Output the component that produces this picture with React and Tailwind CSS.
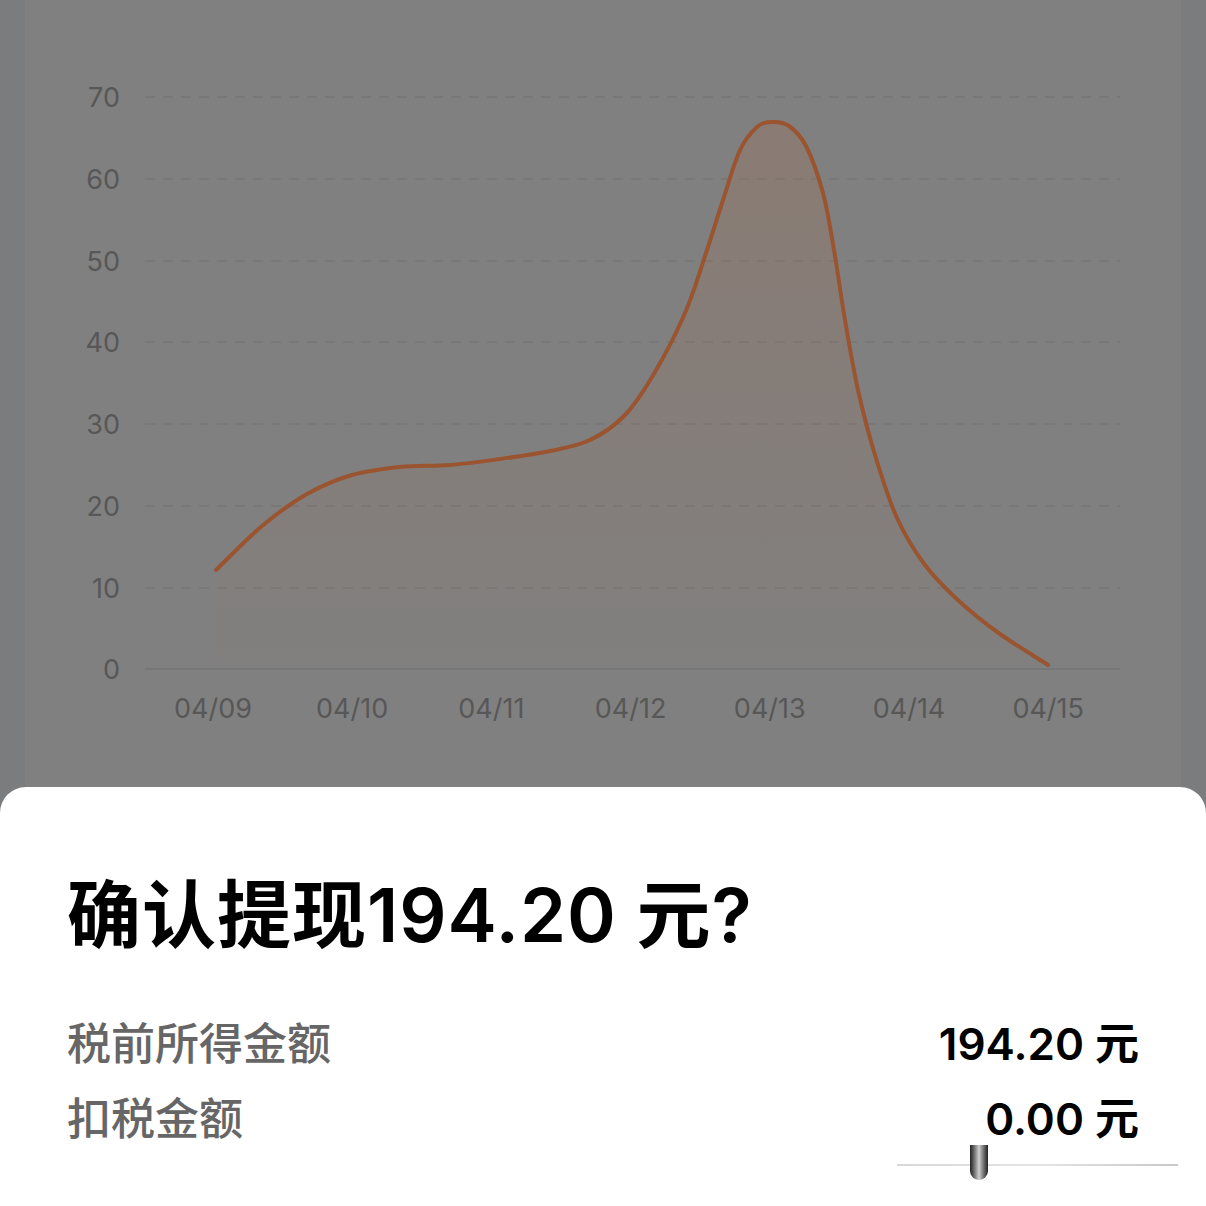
const GRID = [
  { v: 70, y: 97 },
  { v: 60, y: 179 },
  { v: 50, y: 261 },
  { v: 40, y: 342 },
  { v: 30, y: 424 },
  { v: 20, y: 506 },
  { v: 10, y: 588 },
]

const DAYS = ['04/09', '04/10', '04/11', '04/12', '04/13', '04/14', '04/15']

// traced points of the earnings curve, page coordinates
const CURVE = [
  [216, 570], [262, 526], [307, 494], [352, 475], [400, 467], [450, 465],
  [500, 459], [550, 451], [590, 440], [625, 415], [655, 372], [685, 313],
  [706, 253], [723, 200], [740, 150], [757, 127], [772, 122], [789, 126],
  [806, 146], [823, 193], [834, 250], [845, 320], [858, 390], [875, 455],
  [897, 518], [925, 565], [960, 602], [1000, 634], [1048, 665],
]

function smoothPath(pts) {
  let d = `M${pts[0][0]},${pts[0][1]}`
  for (let i = 0; i < pts.length - 1; i++) {
    const p0 = pts[i - 1] || pts[i]
    const p1 = pts[i]
    const p2 = pts[i + 1]
    const p3 = pts[i + 2] || p2
    const c1x = p1[0] + (p2[0] - p0[0]) / 6
    const c1y = p1[1] + (p2[1] - p0[1]) / 6
    const c2x = p2[0] - (p3[0] - p1[0]) / 6
    const c2y = p2[1] - (p3[1] - p1[1]) / 6
    d += ` C${c1x.toFixed(1)},${c1y.toFixed(1)} ${c2x.toFixed(1)},${c2y.toFixed(1)} ${p2[0]},${p2[1]}`
  }
  return d
}

const LABEL_FONT = "Inter, 'Liberation Sans', Arial, sans-serif"

function EarningsChart() {
  const line = smoothPath(CURVE)
  const first = CURVE[0]
  const last = CURVE[CURVE.length - 1]
  const area = `${line} L${last[0]},669 L${first[0]},669 Z`

  return (
    <svg width="1156" height="787" viewBox="25 0 1156 787" className="block">
      <defs>
        <linearGradient id="areaFill" x1="0" y1="97" x2="0" y2="669" gradientUnits="userSpaceOnUse">
          <stop offset="0" stopColor="#c0622e" stopOpacity="0.16" />
          <stop offset="1" stopColor="#c0622e" stopOpacity="0.01" />
        </linearGradient>
      </defs>

      {GRID.map(({ v, y }) => (
        <g key={v}>
          <line x1="145" x2="1120" y1={y} y2={y} stroke="#767676" strokeWidth="1.5" strokeDasharray="10 8" />
          <text x="120" y={y + 10} textAnchor="end" fontSize="27" fill="#575757" fontFamily={LABEL_FONT}>
            {v}
          </text>
        </g>
      ))}
      <line x1="145" x2="1120" y1="669" y2="669" stroke="#757575" strokeWidth="1.5" />
      <text x="120" y="679" textAnchor="end" fontSize="27" fill="#575757" fontFamily={LABEL_FONT}>
        0
      </text>

      {DAYS.map((d, i) => (
        <text
          key={d}
          x={213 + i * 139.2}
          y="718"
          textAnchor="middle"
          fontSize="27"
          fill="#575757"
          fontFamily={LABEL_FONT}
        >
          {d}
        </text>
      ))}

      <path d={area} fill="url(#areaFill)" />
      <path d={line} fill="none" stroke="#9a5430" strokeWidth="4" strokeLinecap="round" strokeLinejoin="round" />
    </svg>
  )
}

export default function App() {
  return (
    <div className="w-full h-[1206px] bg-[#7b7c7e] flex flex-col overflow-hidden font-['Inter','Noto_Sans_CJK_SC',sans-serif]">
      {/* Chart card behind the dim overlay */}
      <div className="mx-[25px] h-[787px] shrink-0 bg-[#808080]">
        <EarningsChart />
      </div>

      {/* Bottom sheet */}
      <div className="relative flex-1 bg-white rounded-t-[26px] px-[67px] pt-[91px]">
        <h1 className="text-[74px] leading-[74px] font-semibold text-black tracking-[1px]">
          确认提现194.20 元?
        </h1>

        <div className="mt-[55px] flex flex-col">
          <div className="flex items-baseline justify-between h-[75px] leading-[75px]">
            <span className="text-[44px] font-medium text-[#666666]">税前所得金额</span>
            <span className="text-[44px] font-semibold text-black">194.20 元</span>
          </div>
          <div className="flex items-baseline justify-between h-[75px] leading-[75px]">
            <span className="text-[44px] font-medium text-[#666666]">扣税金额</span>
            <span className="text-[44px] font-semibold text-black">0.00 元</span>
          </div>
        </div>

        {/* scroll indicator remnant at the bottom edge */}
        <div className="absolute left-[897px] top-[377px] w-[281px] h-[2px] bg-gradient-to-r from-[#d8d8d8] via-[#e4e4e4] to-[#c8c8c8]" />
        <div className="absolute left-[970px] top-[358px] w-[18px] h-[35px] rounded-b-[9px] bg-gradient-to-r from-[#222] via-[#d0d0d0] to-[#222]" />
      </div>
    </div>
  )
}
